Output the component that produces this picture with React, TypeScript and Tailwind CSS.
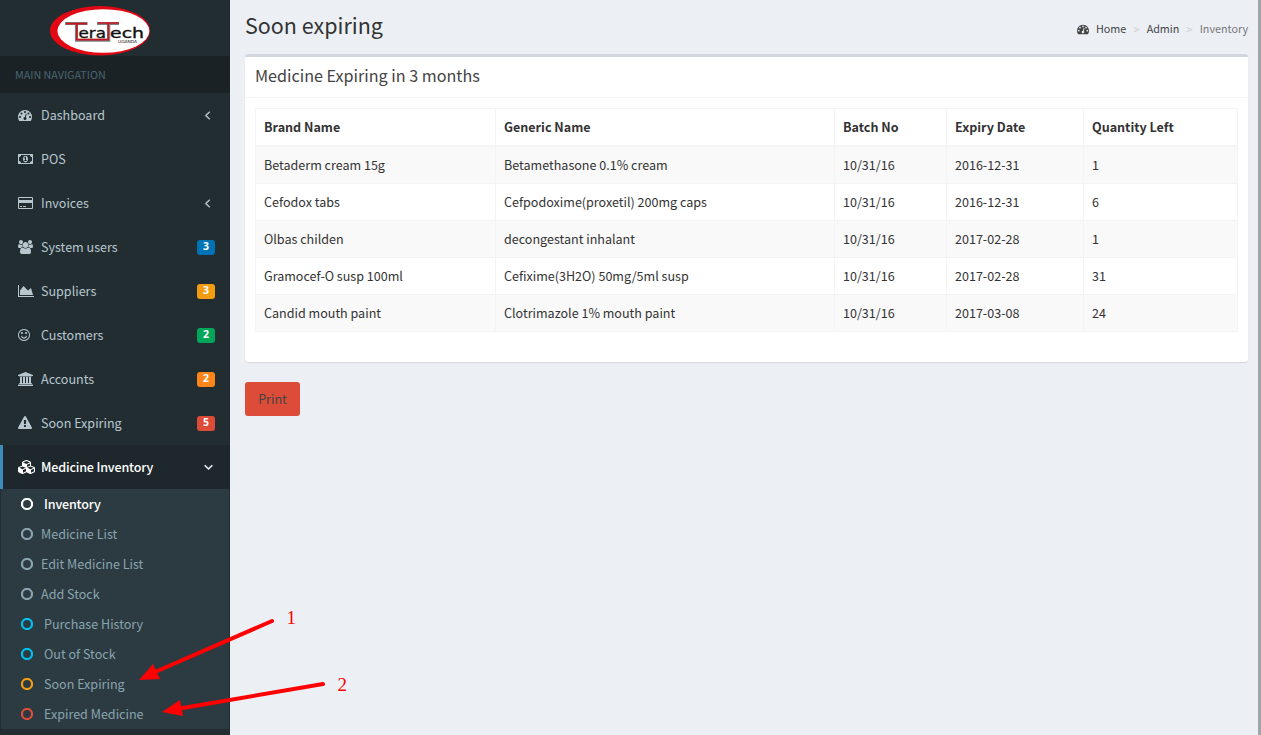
import React from "react";

type Glyph = { d: string; w: number; x?: number };

const ICONS: Record<string, Glyph> = {
  dashboard: {
    w: 1792,
    d: "M384 1152q0-53-37.5-90.5t-90.5-37.5-90.5 37.5-37.5 90.5 37.5 90.5 90.5 37.5 90.5-37.5 37.5-90.5zm192-448q0-53-37.5-90.5t-90.5-37.5-90.5 37.5-37.5 90.5 37.5 90.5 90.5 37.5 90.5-37.5 37.5-90.5zm428 481l101-382q6-26-7.5-48.5t-38.5-29.5-48 6.5-30 39.5l-101 382q-60 5-107 43.5t-63 98.5q-20 77 20 146t117 89 146-20 89-117q16-60-6-117t-72-91zm660-33q0-53-37.5-90.5t-90.5-37.5-90.5 37.5-37.5 90.5 37.5 90.5 90.5 37.5 90.5-37.5 37.5-90.5zm-640-640q0-53-37.5-90.5t-90.5-37.5-90.5 37.5-37.5 90.5 37.5 90.5 90.5 37.5 90.5-37.5 37.5-90.5zm448 192q0-53-37.5-90.5t-90.5-37.5-90.5 37.5-37.5 90.5 37.5 90.5 90.5 37.5 90.5-37.5 37.5-90.5zm320 448q0 261-141 483-19 29-54 29h-1402q-35 0-54-29-141-221-141-483 0-182 71-348t191-286 286-191 348-71 348 71 286 191 191 286 71 348z",
  },
  money: {
    w: 1920,
    d: "M768 1152h384v-96h-128v-448h-114l-148 137 77 80q42-37 55-57h2v288h-128v96zm512-256q0 70-21 142t-59.5 134-101.5 101-138 39-138-39-101.5-101-59.5-134-21-142 21-142 59.5-134 101.5-101 138-39 138 39 101.5 101 59.5 134 21 142zm512 256v-512q-106 0-181-75t-75-181h-1152q0 106-75 181t-181 75v512q106 0 181 75t75 181h1152q0-106 75-181t181-75zm128-832v1152q0 26-19 45t-45 19h-1792q-26 0-45-19t-19-45v-1152q0-26 19-45t45-19h1792q26 0 45 19t19 45z",
  },
  card: {
    w: 1920,
    d: "M1760 128q66 0 113 47t47 113v1216q0 66-47 113t-113 47h-1600q-66 0-113-47t-47-113v-1216q0-66 47-113t113-47h1600zm-1600 128q-13 0-22.5 9.5t-9.5 22.5v224h1664v-224q0-13-9.5-22.5t-22.5-9.5h-1600zm1600 1280q13 0 22.5-9.5t9.5-22.5v-608h-1664v608q0 13 9.5 22.5t22.5 9.5h1600zm-1504-128v-128h256v128h-256zm384 0v-128h384v128h-384z",
  },
  users: {
    w: 1920,
    d: "M593 896q-162 5-265 128h-134q-82 0-138-40.5t-56-118.5q0-353 124-353 6 0 43.5 21t97.5 42.5 119 21.5q67 0 133-23-5 37-5 66 0 139 81 256zm1071 637q0 120-73 189.5t-194 69.5h-874q-121 0-194-69.5t-73-189.5q0-53 3.5-103.5t14-109 26.5-108.5 43-97.5 62-81 85.5-53.5 111.5-20q10 0 43 21.5t73 48 107 48 135 21.5 135-21.5 107-48 73-48 43-21.5q61 0 111.5 20t85.5 53.5 62 81 43 97.5 26.5 108.5 14 109 3.5 103.5zm-1024-1277q0 106-75 181t-181 75-181-75-75-181 75-181 181-75 181 75 75 181zm704 384q0 159-112.5 271.5t-271.5 112.5-271.5-112.5-112.5-271.5 112.5-271.5 271.5-112.5 271.5 112.5 112.5 271.5zm576 225q0 78-56 118.5t-138 40.5h-134q-103-123-265-128 81-117 81-256 0-29-5-66 66 23 133 23 59 0 119-21.5t97.5-42.5 43.5-21q124 0 124 353zm-128-609q0 106-75 181t-181 75-181-75-75-181 75-181 181-75 181 75 75 181z",
  },
  area: {
    w: 2048,
    d: "M2048 1536v128h-2048v-1536h128v1408h1920zm-384-1024l256 896h-1664v-576l448-576 576 576z",
  },
  smile: {
    w: 1536,
    x: 128,
    d: "M1262 1075q-37 121-138 195t-228 74-228-74-138-195q-8-25 4-48.5t38-31.5q25-8 48.5 4t31.5 38q25 80 92.5 129.5t151.5 49.5 151.5-49.5 92.5-129.5q8-26 32-38t49-4 37 31.5 4 48.5zm-494-435q0 53-37.5 90.5t-90.5 37.5-90.5-37.5-37.5-90.5 37.5-90.5 90.5-37.5 90.5 37.5 37.5 90.5zm512 0q0 53-37.5 90.5t-90.5 37.5-90.5-37.5-37.5-90.5 37.5-90.5 90.5-37.5 90.5 37.5 37.5 90.5zm256 256q0-130-51-248.5t-136.5-204-204-136.5-248.5-51-248.5 51-204 136.5-136.5 204-51 248.5 51 248.5 136.5 204 204 136.5 248.5 51 248.5-51 204-136.5 136.5-204 51-248.5zm128 0q0 209-103 385.5t-279.5 279.5-385.5 103-385.5-103-279.5-279.5-103-385.5 103-385.5 279.5-279.5 385.5-103 385.5 103 279.5 279.5 103 385.5z",
  },
  bank: {
    w: 1920,
    d: "M960 0l960 384v128h-128q0 26-20.5 45t-48.5 19h-1526q-28 0-48.5-19t-20.5-45h-128v-128zm-704 640h256v768h128v-768h256v768h128v-768h256v768h128v-768h256v768h59q28 0 48.5 19t20.5 45v64h-1664v-64q0-26 20.5-45t48.5-19h59v-768zm1595 960q28 0 48.5 19t20.5 45v128h-1920v-128q0-26 20.5-45t48.5-19h1782z",
  },
  warning: {
    w: 1792,
    d: "M1024 1375v-190q0-14-9.5-23.5t-22.5-9.5h-192q-13 0-22.5 9.5t-9.5 23.5v190q0 14 9.5 23.5t22.5 9.5h192q13 0 22.5-9.5t9.5-23.5zm-2-374l18-459q0-12-10-19-13-11-24-11h-220q-11 0-24 11-10 7-10 21l17 457q0 10 10 16.5t24 6.5h185q14 0 23.5-6.5t10.5-16.5zm-14-934l768 1408q35 63-2 126-17 29-46.5 46t-63.5 17h-1536q-34 0-63.5-17t-46.5-46q-37-63-2-126l768-1408q17-31 47-49t65-18 65 18 47 49z",
  },
  cubes: {
    w: 2304,
    d: "M640 1632l384-192v-314l-384 164v342zm-64-454l404-173-404-173-404 173zm1088 454l384-192v-314l-384 164v342zm-64-454l404-173-404-173-404 173zm-448-293l384-165v-266l-384 164v267zm-64-379l441-189-441-189-441 189zm1088 518v416q0 36-19 67t-52 47l-448 224q-25 14-57 14t-57-14l-448-224q-4-2-7-4-2 2-7 4l-448 224q-25 14-57 14t-57-14l-448-224q-33-16-52-47t-19-67v-416q0-38 21.5-70t56.5-48l434-186v-400q0-38 21.5-70t56.5-48l448-192q23-10 50-10t50 10l448 192q35 16 56.5 48t21.5 70v400l434 186q36 16 57 48t21 70z",
  },
  left: {
    w: 640,
    x: 590,
    d: "M1203 544q0 13-10 23l-393 393 393 393q10 10 10 23t-10 23l-50 50q-10 10-23 10t-23-10l-466-466q-10-10-10-23t10-23l466-466q10-10 23-10t23 10l50 50q10 10 10 23z",
  },
  down: {
    w: 1152,
    x: 320,
    d: "M1395 736q0 13-10 23l-466 466q-10 10-23 10t-23-10l-466-466q-10-10-10-23t10-23l50-50q10-10 23-10t23 10l393 393 393-393q10-10 23-10t23 10l50 50q10 10 10 23z",
  },
};

function Icon({ name, size = 14, bold = false }: { name: string; size?: number; bold?: boolean }) {
  const g = ICONS[name];
  return (
    <svg
      width={(g.w / 1792) * size}
      height={size}
      viewBox={`${g.x ?? 0} 0 ${g.w} 1792`}
      fill="currentColor"
      stroke="currentColor"
      strokeWidth={bold ? 70 : 0}
      className="block shrink-0 overflow-visible"
    >
      <path d={g.d} />
    </svg>
  );
}

function Logo() {
  return (
    <svg width="100" height="50" viewBox="0 0 100 50" className="block">
      <ellipse cx="50" cy="24.7" rx="50" ry="24.7" fill="#e30613" />
      <ellipse cx="53.4" cy="25" rx="46" ry="21.8" fill="#fff" />
      <g fill="none" stroke="#7b8186" strokeWidth="3">
        <path d="M15 17.4H37.600M26.400 17V34.200H58.800V17M47 17.400H69" />
      </g>
      <g fill="none" stroke="#c8141e" strokeWidth="1.700">
        <path d="M16 17.600H37M26.800 17.400V33.600H58.200V17.400M48 17H69" />
      </g>
      <g fill="#111" stroke="#111" strokeWidth="0.35" fontFamily="'DejaVu Sans', sans-serif">
        <text x="28.500" y="31.800" fontSize="14" textLength="27.500" lengthAdjust="spacingAndGlyphs">era</text>
        <text x="60" y="31.800" fontSize="14" textLength="34" lengthAdjust="spacingAndGlyphs">ech</text>
      </g>
      <text
        x="68"
        y="36.500"
        fontSize="4"
        fill="#111"
        fontFamily="'DejaVu Sans', sans-serif"
        textLength="19"
        lengthAdjust="spacingAndGlyphs"
      >
        UGANDA
      </text>
    </svg>
  );
}

const NAV = [
  { icon: "dashboard", label: "Dashboard", arrow: true },
  { icon: "money", label: "POS" },
  { icon: "card", label: "Invoices", arrow: true },
  { icon: "users", label: "System users", badge: "3", color: "bg-[#0073b7]" },
  { icon: "area", label: "Suppliers", badge: "3", color: "bg-[#f39c12]" },
  { icon: "smile", label: "Customers", badge: "2", color: "bg-[#00a65a]" },
  { icon: "bank", label: "Accounts", badge: "2", color: "bg-[#ff851b]" },
  { icon: "warning", label: "Soon Expiring", badge: "5", color: "bg-[#dd4b39]" },
];

const SUB = [
  { label: "Inventory", ring: "text-white", text: "text-white font-medium tracking-[-0.16px]", pad: "pl-[11px]" },
  { label: "Medicine List", ring: "text-[#8aa4af]", text: "text-[#8aa4af]", pad: "pl-2" },
  { label: "Edit Medicine List", ring: "text-[#8aa4af]", text: "text-[#8aa4af]", pad: "pl-2" },
  { label: "Add Stock", ring: "text-[#8aa4af]", text: "text-[#8aa4af]", pad: "pl-2" },
  { label: "Purchase History", ring: "text-[#00c0ef]", text: "text-[#8aa4af]", pad: "pl-[11px]" },
  { label: "Out of Stock", ring: "text-[#00c0ef]", text: "text-[#8aa4af]", pad: "pl-[11px]" },
  { label: "Soon Expiring", ring: "text-[#f39c12]", text: "text-[#8aa4af]", pad: "pl-[11px]" },
  { label: "Expired Medicine", ring: "text-[#dd4b39]", text: "text-[#8aa4af]", pad: "pl-[11px]" },
];

const COLUMNS = ["Brand Name", "Generic Name", "Batch No", "Expiry Date", "Quantity Left"];

const ROWS = [
  ["Betaderm cream 15g", "Betamethasone 0.1% cream", "10/31/16", "2016-12-31", "1"],
  ["Cefodox tabs", "Cefpodoxime(proxetil) 200mg caps", "10/31/16", "2016-12-31", "6"],
  ["Olbas childen", "decongestant inhalant", "10/31/16", "2017-02-28", "1"],
  ["Gramocef-O susp 100ml", "Cefixime(3H2O) 50mg/5ml susp", "10/31/16", "2017-02-28", "31"],
  ["Candid mouth paint", "Clotrimazole 1% mouth paint", "10/31/16", "2017-03-08", "24"],
];

function Sidebar() {
  return (
    <aside className="flex w-[230px] shrink-0 flex-col bg-[#222d32] text-[#b8c7ce]">
      <div className="flex h-14 pt-1.5 pl-[50px]">
        <Logo />
      </div>
      <div className="h-[37px] bg-[#1a2226] pl-[15px] text-[10.75px] leading-[37px] text-[#4b646f]">
        MAIN NAVIGATION
      </div>
      {NAV.map((n) => (
        <div key={n.label} className="flex h-11 items-center pr-[15px] pl-[18px]">
          <span className="w-[23px]">
            <Icon name={n.icon} />
          </span>
          <span className="flex-1">{n.label}</span>
          {n.arrow && (
            <span className="pr-[5px]">
              <Icon name="left" bold />
            </span>
          )}
          {n.badge && (
            <span
              className={`h-[15px] w-[18px] rounded-[3px] text-center font-['Open_Sans'] text-[10.5px] leading-[13px] font-bold text-white ${n.color}`}
            >
              {n.badge}
            </span>
          )}
        </div>
      ))}
      <div className="flex h-11 items-center border-l-3 border-[#3c8dbc] bg-[#1e282c] pr-[17px] pl-[15px] font-medium text-white">
        <span className="w-[23px]">
          <Icon name="cubes" />
        </span>
        <span className="flex-1 tracking-[-0.16px]">Medicine Inventory</span>
        <Icon name="down" bold />
      </div>
      <div className="mx-px bg-[#2c3b41]">
        {SUB.map((s) => (
          <div key={s.label} className="flex h-[30px] items-center pl-5">
            <svg width="12" height="12" viewBox="0 0 12 12" className={s.ring}>
              <circle cx="6" cy="6" r="5.050" fill="none" stroke="currentColor" strokeWidth="2.200" />
            </svg>
            <span className={`${s.pad} ${s.text}`}>{s.label}</span>
          </div>
        ))}
      </div>
    </aside>
  );
}

function Annotations() {
  return (
    <svg
      width="370"
      height="135"
      viewBox="0 600 370 135"
      className="pointer-events-none absolute top-[600px] left-0"
      fill="#f00"
    >
      <g stroke="#f00" strokeWidth="4" strokeLinecap="round">
        <path d="M272 621L155 672" />
        <path d="M323 684L180 708.500" />
      </g>
      <path d="M139 680L153 664L160 679Z" />
      <path d="M162 712L180 700L183 716Z" />
      <g fontFamily="'Liberation Serif', serif" fontSize="19">
        <text x="286.500" y="624">1</text>
        <text x="337.500" y="691">2</text>
      </g>
    </svg>
  );
}

export default function App() {
  return (
    <div className="relative flex h-[735px] w-[1261px] overflow-hidden bg-[#ecf0f5] font-['Noto_Sans_CJK_SC',sans-serif] text-[12.55px] leading-5 text-[#333]">
      <Sidebar />
      <main className="flex-1 px-[15px] pr-2.5">
        <header className="flex h-[54px] items-start justify-between">
          <h1 className="pt-2.5 text-[21.5px] leading-[30px]">Soon expiring</h1>
          <nav className="flex items-center pt-[19px] text-[10.75px] text-[#444]">
            <Icon name="dashboard" size={12} />
            <span className="pl-[7px]">Home</span>
            <span className="px-[7px] text-[11.5px] text-[#ccc]">&gt;</span>
            <span>Admin</span>
            <span className="px-[7px] text-[11.5px] text-[#ccc]">&gt;</span>
            <span className="text-[#777]">Inventory</span>
          </nav>
        </header>
        <section className="h-[308px] rounded-[3px] border-t-3 border-[#d2d6de] bg-white shadow-[0_1px_1px_rgba(0,0,0,0.1)]">
          <h3 className="h-[41px] border-b border-[#f4f4f4] pl-2.5 text-[16.15px] leading-9 text-[#444]">
            Medicine Expiring in 3 months
          </h3>
          <div className="p-2.5">
            <table className="w-full table-fixed border-separate border-spacing-0 border-t border-r border-[#f4f4f4] text-left">
              <colgroup>
                <col className="w-[240px]" />
                <col className="w-[339px]" />
                <col className="w-[112px]" />
                <col className="w-[137px]" />
                <col />
              </colgroup>
              <thead>
                <tr>
                  {COLUMNS.map((c) => (
                    <th key={c} className="h-[38px] border-b-2 border-l border-[#f4f4f4] px-2 py-0 font-bold">
                      {c}
                    </th>
                  ))}
                </tr>
              </thead>
              <tbody>
                {ROWS.map((r) => (
                  <tr key={r[0]} className="odd:bg-[#f9f9f9]">
                    {r.map((v, i) => (
                      <td key={i} className="h-[37px] border-b border-l border-[#f4f4f4] px-2 py-0">
                        {v}
                      </td>
                    ))}
                  </tr>
                ))}
              </tbody>
            </table>
          </div>
        </section>
        <button className="mt-5 h-[34px] w-[55px] rounded-[3px] bg-[#dd4b39] text-center text-[#444]">
          Print
        </button>
      </main>
      <div className="w-[3px] bg-[#a0a5a9]" />
      <Annotations />
    </div>
  );
}
